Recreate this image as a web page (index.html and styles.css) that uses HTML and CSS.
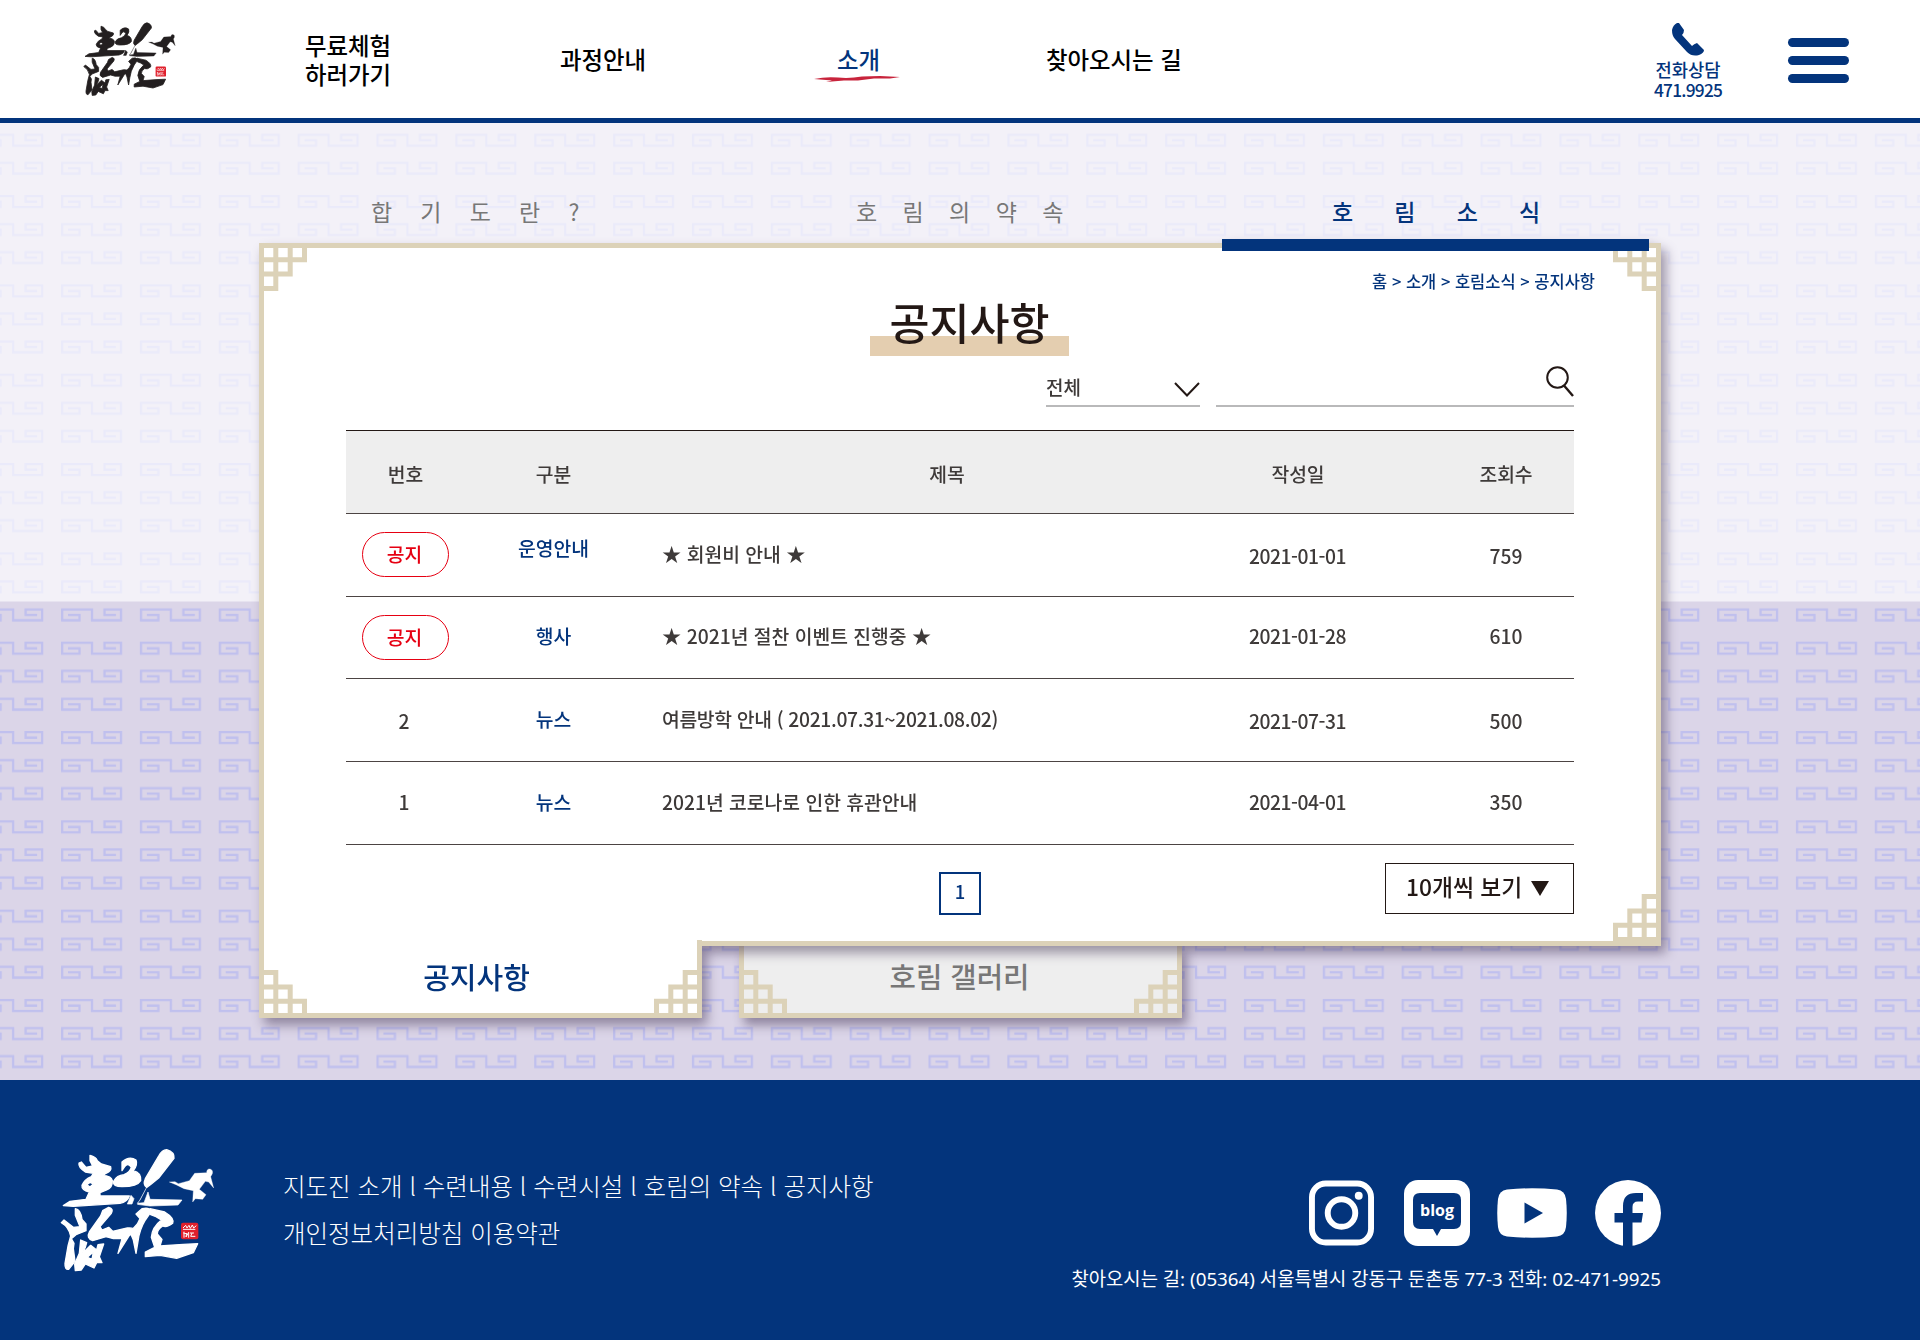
FILE: index.html
```html
<!DOCTYPE html>
<html lang="ko">
<head>
<meta charset="utf-8">
<title>호림합기도 - 공지사항</title>
<link rel="stylesheet" href="styles.css">
</head>
<body>
<svg class="defs" width="0" height="0" aria-hidden="true">
  <symbol id="corner" viewBox="0 0 48 48">
    <path d="M2.500 2.500H45.500V16.800H2.500M31.200 2.500V31.100H2.500M16.800 2.500V45.500H2.500V2.500" fill="none" stroke="#dcd2b8" stroke-width="5"/>
  </symbol>
  <symbol id="logo" viewBox="0 0 540 420">
    <g fill="currentColor" stroke="currentColor" stroke-width="4" stroke-linejoin="round">
      <path fill-rule="evenodd" d="M120 46Q138 50 142 62L154 72L182 80Q186 92 168 100L160 106Q184 108 187 122Q188 142 170 150L150 158L150 168L238 168Q232 186 210 190L70 199L40 197L60 184L108 178L118 156Q94 150 96 136Q104 118 124 110L130 100L106 96Q84 82 87 69L94 66L108 82L128 78L120 62ZM110 134L120 141L130 132L120 127Z"/>
      <path d="M216 66Q238 46 258 60Q264 74 250 92Q274 98 272 122Q262 140 216 140Q188 140 191 124Q200 106 222 104Q240 96 244 82Q234 66 224 80L216 92Z"/>
      <path d="M350 29Q374 36 372 55L326 114L304 132L290 142Q278 134 286 116L326 48Q336 30 350 29Z"/>
      <path d="M290 142L270 180L262 190L282 188L294 156L300 178L396 180L384 195L300 198L262 193M243 166L232 192L246 192L252 176Z" stroke-width="2"/>
      <path d="M358 126L375 125L385 131L418 122L434 100L470 98Q470 86 480 87Q490 90 487 101L482 110L491 144L476 126L466 124L448 148L468 164L458 178L436 176L428 186L430 152L402 146L378 134Z" stroke-width="1"/>
      <path d="M76 206Q92 208 96 238L108 252L108 272L78 284L64 296L72 310L70 326L75 364L56 388Q44 390 45 370L54 318L62 288Q56 260 34 248L42 240L70 262L90 260L76 226Z"/>
      <path d="M176 202Q192 206 184 220L150 260L156 270L176 262L188 274L232 264Q256 262 256 274L238 286L204 340L216 296L190 296L168 290L128 302Q108 294 118 276L152 228L158 212Z"/>
      <path fill-rule="evenodd" d="M92 300L110 308L106 322L98 340L122 316L140 330L144 314L161 312L148 350L156 368L140 368L132 384L106 372L94 390L76 392L74 372L88 340ZM112 352L126 358L130 336Z"/>
      <path d="M276 206Q298 200 304 214L286 240Q268 270 264 304L258 340L250 300L240 276L262 252L270 236L258 222Z"/>
      <path d="M300 206L344 216Q374 234 368 250Q350 264 338 258Q322 268 322 282L336 298L330 318L400 313L443 311L430 338L380 355L330 346L286 350L286 336L314 322L304 292Q306 262 334 240L318 230L302 224Z"/>
    </g>
    <rect x="393" y="248" width="52" height="50" rx="6" fill="#e0202c"/>
    <path d="M399 264l8-8 4 8 6-8 4 9 6-10 4 9 8-7M399 268h37M400 279l8 2m-6-6v18m8-14l-2 12 8-14v16m4-14h12m-6 0l-4 10h14" fill="none" stroke="#fff" stroke-width="3"/>
  </symbol>
</svg>

<header class="header">
  <svg class="logo"><use href="#logo"/></svg>
  <nav class="gnb">
    <a class="g1">무료체험<br>하러가기</a>
    <a class="g2">과정안내</a>
    <a class="g3">소개
      <svg class="brush" viewBox="0 0 86 8"><path d="M0 4Q12 1.500 24 2.600T48 1.500L66 1L86 2L76 3.500L60 3.600L44 5.600L30 5.600L12 7L18 5.500Z" fill="#c8243c"/></svg>
    </a>
    <a class="g4">찾아오시는 길</a>
  </nav>
  <div class="call">
    <svg viewBox="0 0 32 33"><path d="M5 0Q1 2 0 7Q0 13 3 16L15 29Q20 34 27 32Q32 30 32 27L25 20Q22 21 20 23L10 12Q12 10 12 7L7 0Z" fill="#03347c"/></svg>
    <span class="call-t">전화상담</span>
    <span class="call-n">471.9925</span>
  </div>
  <div class="burger"><i></i><i></i><i></i></div>
</header>

<main class="hero">
  <svg class="pattern" aria-hidden="true">
    <defs>
      <g id="fret" fill="none" stroke="#c0c0ee" stroke-width="2.300">
        <path d="M7 6.700H18.500V12H1.200V1.200H31V12H60V1.200H43.500V6.700H55"/>
      </g>
      <pattern id="frets" x="61" y="72" width="78.860" height="89.330" patternUnits="userSpaceOnUse">
        <use href="#fret"/><use href="#fret" y="28"/><use href="#fret" y="56"/>
      </pattern>
    </defs>
    <rect width="100%" height="100%" fill="#dbd5e8"/>
    <rect width="100%" height="100%" fill="url(#frets)"/>
    <rect width="100%" height="478.500" fill="#fff" fill-opacity=".67"/>
  </svg>

  <nav class="lnb">
    <a class="l1">합기도란?</a>
    <a class="l2">호림의약속</a>
    <a class="l3">호림소식</a>
  </nav>

  <div class="board">
    <div class="frame">
      <section class="panel">
        <svg class="corner tl"><use href="#corner"/></svg>
        <svg class="corner tr"><use href="#corner"/></svg>
        <svg class="corner br"><use href="#corner"/></svg>
        <div class="marker"></div>
        <p class="crumb">홈 &gt; 소개 &gt; 호림소식 &gt; 공지사항</p>
        <h1 class="title"><span>공지사항</span></h1>
        <div class="search">
          <div class="select"><span>전체</span>
            <svg viewBox="0 0 26 15"><path d="M1 1L13 13.500L25 1" fill="none" stroke="#231815" stroke-width="2"/></svg>
          </div>
          <div class="field">
            <svg viewBox="0 0 28 31"><circle cx="11.500" cy="11.500" r="10.300" fill="none" stroke="#231815" stroke-width="2"/><path d="M18 19.500L27 30" stroke="#231815" stroke-width="2.400"/></svg>
          </div>
        </div>
        <div class="table">
          <div class="row head"><span>번호</span><span>구분</span><span class="subject">제목</span><span class="date">작성일</span><span>조회수</span></div>
          <div class="row"><span><b class="pill">공지</b></span><span class="cat up">운영안내</span><span class="subject">★ 회원비 안내 ★</span><span class="date down">2021-01-01</span><span class="down">759</span></div>
          <div class="row"><span><b class="pill">공지</b></span><span class="cat">행사</span><span class="subject">★ 2021년 절찬 이벤트 진행중 ★</span><span class="date">2021-01-28</span><span>610</span></div>
          <div class="row"><span class="num down">2</span><span class="cat">뉴스</span><span class="subject period">여름방학 안내 ( 2021.07.31~2021.08.02)</span><span class="date down">2021-07-31</span><span class="down">500</span></div>
          <div class="row"><span class="num">1</span><span class="cat">뉴스</span><span class="subject">2021년 코로나로 인한 휴관안내</span><span class="date">2021-04-01</span><span>350</span></div>
        </div>
        <div class="pager">
          <a class="page">1</a>
          <div class="size"><span>10개씩 보기</span><svg viewBox="0 0 18 15"><path d="M0 0H18L9 15Z" fill="#231815"/></svg></div>
        </div>
      </section>
      <div class="tab active">
        <svg class="corner bl"><use href="#corner"/></svg>
        <svg class="corner br"><use href="#corner"/></svg>
        <span>공지사항</span>
      </div>
    </div>
    <div class="tab idle">
      <svg class="corner bl"><use href="#corner"/></svg>
      <svg class="corner br"><use href="#corner"/></svg>
      <span>호림 갤러리</span>
    </div>
  </div>
</main>

<footer class="footer">
  <svg class="flogo"><use href="#logo"/></svg>
  <div class="flinks">
    <p class="f1">지도진 소개 l 수련내용 l 수련시설 l 호림의 약속 l 공지사항</p>
    <p class="f2">개인정보처리방침 이용약관</p>
  </div>
  <div class="finfo">
    <div class="sns">
      <svg width="65" height="66" viewBox="0 0 66 66"><rect x="3" y="3" width="60" height="60" rx="14" fill="none" stroke="#fff" stroke-width="6"/><circle cx="33" cy="33" r="14" fill="none" stroke="#fff" stroke-width="6"/><circle cx="50.500" cy="15.500" r="4" fill="#fff"/></svg>
      <div class="blog"><svg viewBox="0 0 66 66"><rect width="66" height="66" rx="14" fill="#fff"/><path d="M16 13H50Q57 13 57 20V42Q57 49 50 49H37L33 56L29 49H16Q9 49 9 42V20Q9 13 16 13Z" fill="#03347c"/></svg><span>blog</span></div>
      <svg class="yt" width="70" height="50" viewBox="0 0 70 50"><path d="M10 1.500Q35-1 60 1.500Q68 2.500 69 11Q70.500 25 69 39Q68 47.500 60 48.500Q35 51 10 48.500Q2 47.500 1 39Q-.5 25 1 11Q2 2.500 10 1.500Z" fill="#fff"/><path d="M27.500 14.500V35.500L46 25Z" fill="#03347c"/></svg>
      <svg width="66" height="66" viewBox="0 0 66 66"><circle cx="33" cy="33" r="33" fill="#fff"/><path d="M28 66V42.500H19.500V33H28V26Q28 13 41 13H48V21.500H43Q37.500 21.500 37.500 27V33H48L46.500 42.500H37.500V66Z" fill="#03347c"/></svg>
    </div>
    <p class="addr">찾아오시는 길: (05364) 서울특별시 강동구 둔촌동 77-3 전화: 02-471-9925</p>
  </div>
</footer>
</body>
</html>
```
FILE: styles.css
```css
* { box-sizing: border-box; }
body {
  margin: 0;
  width: 1920px;
  height: 1341px;
  background: #fff;
  color: #3e3a39;
  font-family: "Noto Sans CJK KR", "Noto Sans", sans-serif;
  font-weight: 500;
}
p, h1 { margin: 0; font-weight: inherit; }
a { color: inherit; white-space: nowrap; }
svg { display: block; }
.defs { position: absolute; }

.header {
  display: flex;
  height: 123px;
  padding-left: 77px;
  border-bottom: 5px solid #03347c;
}
.logo { width: 108px; height: 84px; margin-top: 17px; color: #231f20; flex: none; }
.gnb { display: flex; align-items: center; height: 119px; width: 1469px; color: #000; font-size: 23.400px; line-height: 29px; flex: none; }
.g1 { margin-left: 120px; width: 255px; }
.g2 { width: 277px; }
.g3 { position: relative; width: 209px; color: #03347c; }
.brush { position: absolute; left: -23px; top: 30px; width: 86px; height: 8px; }
.call { width: 68px; margin-right: 2px; padding-top: 23px; color: #03347c; text-align: center; flex: none; }
.call svg { width: 32px; height: 33px; margin: 0 auto 3px; }
.call span { display: block; font-size: 17.700px; line-height: 21px; white-space: nowrap; }
.call .call-n { font-size: 17.300px; letter-spacing: -.75px; line-height: 20px; }
.burger { display: flex; flex-direction: column; gap: 9px; margin: 38px 0 0 64px; width: 61px; }
.burger i { height: 9px; border-radius: 4.500px; background: #03347c; }

.hero { position: relative; height: 957px; }
.pattern { position: absolute; inset: 0; width: 100%; height: 100%; }
.lnb { position: relative; display: flex; height: 120px; padding: 70px 0 0 371px; font-size: 23px; line-height: 36px; color: #777; font-weight: 400; }
.l1 { width: 485px; letter-spacing: 28.200px; }
.l2 { width: 476px; letter-spacing: 25.400px; }
.l3 { letter-spacing: 41.200px; color: #03347c; font-weight: 500; }

.board { position: relative; display: grid; grid-template-rows: 703px 72px; width: 1402px; margin-left: 259px; }
.frame { grid-area: 1 / 1 / 3 / 2; z-index: 1; filter: drop-shadow(5px 7px 6px rgba(50, 35, 70, .45)); }
.panel { position: relative; height: 703px; border: 5px solid #dcd2b8; background: #fff; }
.corner { position: absolute; width: 48px; height: 48px; }
.tl { left: -5px; top: -5px; }
.tr { right: -5px; top: -5px; transform: scaleX(-1); }
.bl { left: -5px; bottom: -5px; transform: scaleY(-1); }
.br { right: -5px; bottom: -5px; transform: scale(-1); }
.panel .br { height: 52px; bottom: -5px; padding-top: 4px; }
.marker { position: absolute; left: 958px; top: -9px; width: 427px; height: 12px; background: #03347c; }
.tab {
  position: relative;
  width: 443px;
  border: 5px solid #dcd2b8;
  border-top: 0;
  display: flex;
  justify-content: center;
  font-size: 28.500px;
  line-height: 40px;
}
.active { height: 78px; margin-top: -6px; padding: 16px 8px 0 0; background: #fff; color: #03347c; font-size: 29px; }
.idle { grid-area: 2 / 1; margin-left: 480px; padding: 10px 2px 0 0; background: #eee; color: #777; font-size: 28.700px; box-shadow: 5px 7px 10px rgba(50, 35, 70, .45); }

.crumb { margin: 21px 61px 0 0; text-align: right; font-size: 16.500px; line-height: 24px; color: #03347c; }
.title { display: flex; justify-content: center; margin: 3px 0 0 19px; height: 62px; }
.title span {
  width: 199px;
  height: 60px;
  text-align: center;
  font-size: 43.500px;
  line-height: 52px;
  color: #231815;
  background: linear-gradient(#e4ceb0, #e4ceb0) 0 40px / 199px 20px no-repeat;
}
.search { display: flex; gap: 16px; height: 49px; margin-left: 782px; }
.select, .field { display: flex; justify-content: space-between; border-bottom: 2px solid #b9b9ba; }
.select { width: 154px; font-size: 19px; line-height: 28px; padding-top: 15px; }
.select svg { width: 26px; height: 15px; margin-top: 9px; }
.field { width: 358px; justify-content: flex-end; }
.field svg { width: 28px; height: 31px; margin-top: 8px; }

.table { margin: 23px 0 0 82px; width: 1228px; border-top: 1px solid #231815; font-size: 19.300px; }
.row { display: grid; grid-template-columns: 119px 177px 568px 228px 136px; align-items: center; height: 82.750px; border-bottom: 1px solid #4c4443; padding-bottom: 2px; text-align: center; line-height: 28px; }
.row > span { white-space: nowrap; }
.head { padding: 5px 0 0; background: #eee; }
.head .subject { text-align: center; padding-left: 42px; }
.subject { padding-left: 20px; text-align: left; }
.period { letter-spacing: -.32px; }
.date { padding-right: 53px; letter-spacing: -.45px; }
.head .date { letter-spacing: 0; padding-right: 52px; }
.num { padding-right: 3px; }
.cat { color: #03347c; }
.up { margin-top: -12px; }
.down { margin-top: 4px; }
.pill { display: block; width: 87px; height: 45px; margin: 2px auto 0; border: 1.500px solid #e60012; border-radius: 23px; color: #e60012; font-weight: 500; line-height: 42px; padding-right: 2px; }

.pager { display: flex; justify-content: space-between; margin: 18px 82px 0 675px; }
.page { width: 42px; height: 43px; margin-top: 9px; border: 2px solid #03347c; color: #03347c; text-align: center; font-size: 18.500px; line-height: 35px; }
.size { display: flex; gap: 9px; width: 189px; height: 51px; padding-left: 20px; border: 1px solid #231815; color: #231815; font-size: 22.800px; line-height: 45px; white-space: nowrap; }
.size svg { width: 18px; height: 15px; margin-top: 17px; }

.footer { display: flex; height: 260px; background: #03347c; color: #fff; font-weight: 300; }
.flogo { width: 180px; height: 140px; margin: 60px 0 0 50px; flex: none; }
.flinks { width: 660px; padding: 82px 0 0 53px; font-size: 24.500px; line-height: 47px; white-space: nowrap; flex: none; }
.finfo { width: 771px; padding-top: 100px; flex: none; }
.sns { display: flex; justify-content: flex-end; align-items: center; height: 66px; }
.blog { position: relative; width: 66px; height: 66px; margin: 0 27px 0 30px; }
.blog span { position: absolute; inset: 18px 0 0; text-align: center; font: 700 16px/24px "Open Sans", sans-serif; }
.yt { margin-right: 28px; }
.addr { margin-top: 19px; text-align: right; font-family: "Noto Sans", "Noto Sans CJK KR", sans-serif; font-size: 18.800px; font-weight: 400; line-height: 28px; white-space: nowrap; }
```
